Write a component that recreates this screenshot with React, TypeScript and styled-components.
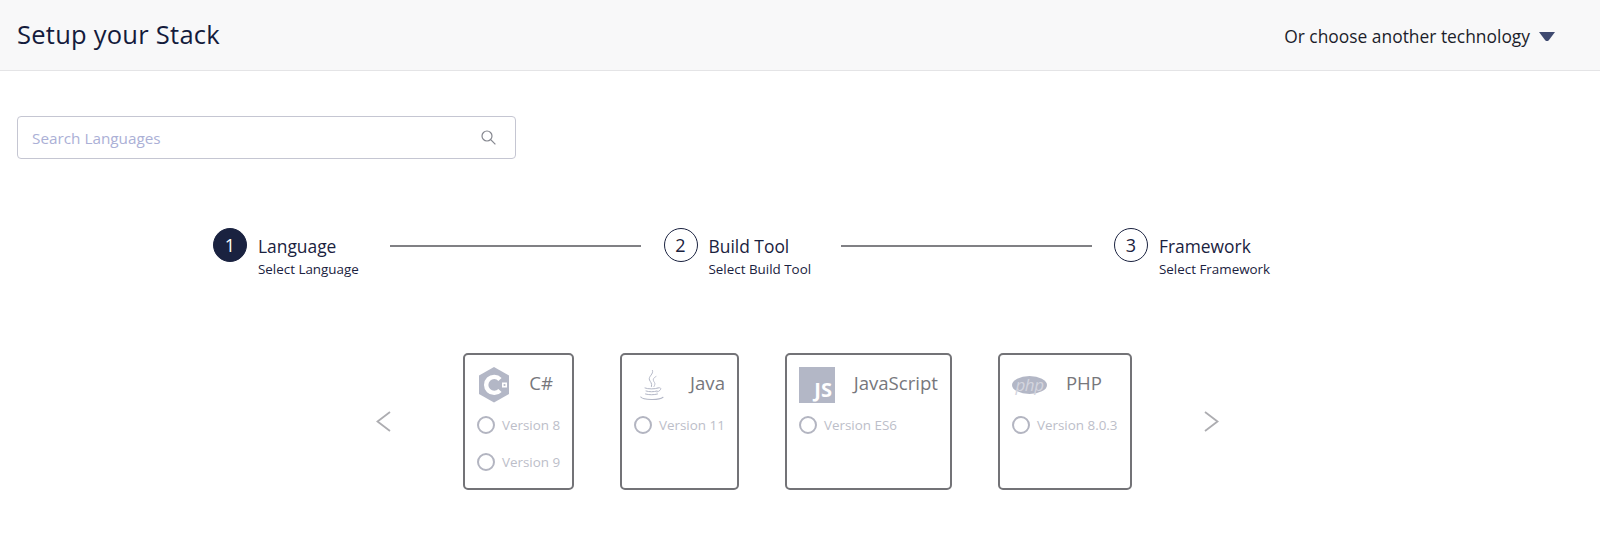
import React from 'react'
import styled, { createGlobalStyle } from 'styled-components'

const STEPS = [
    { title: 'Language', sub: 'Select Language' },
    { title: 'Build Tool', sub: 'Select Build Tool' },
    { title: 'Framework', sub: 'Select Framework' },
]

const CSharpIcon = () => (
    <svg width='34' height='36' viewBox='0 0 34 36'>
        <polygon points='17,0 32,8.5 32,27 17,35.5 2,27 2,8.5' fill='#b3b7c6' />
        <path d='M23 12.4 A8 8 0 1 0 23 23.4' fill='none' stroke='#fff' strokeWidth='4.4' />
        <rect x='25' y='15.5' width='5' height='5' fill='#fff' />
        <rect x='26.6' y='17.1' width='1.8' height='1.8' fill='#b3b7c6' />
    </svg>
)

const JavaIcon = () => (
    <svg width='24' height='31' viewBox='0 0 24 31' fill='none' stroke='#b3b7c6' strokeLinecap='round'>
        <path d='M12.5 .5 C14 4 8 6.5 9.5 10 C10.3 12 12.3 13 11.5 16.5' strokeWidth='1' />
        <path d='M16 6.5 C13 8 12.5 10 14.5 12.5 C15.3 13.7 14.8 15 14 16.5' strokeWidth='.9' />
        <path d='M5 18 C8 19.2 15 19.2 18 18 M6 21 C9 22 14 22 17 21 M5.5 24 C9 25 14 25 17.5 24' strokeWidth='1' />
        <path d='M18 18 C22 16.5 22 20.5 17 22' strokeWidth='.9' />
        <path d='M.8 27 C3 30 19 30.5 23 27.3' strokeWidth='1.1' />
    </svg>
)

export default function App() {
    return (
        <>
            <GlobalStyle />
            <Header>
                <PageTitle>Setup your Stack</PageTitle>
                <TechMenu>
                    Or choose another technology
                    <svg width='16' height='9' viewBox='0 0 16 9'>
                        <polygon points='0,0 16,0 10,8 9,9 7,9 6,8' fill='#3f4a70' />
                    </svg>
                </TechMenu>
            </Header>
            <Main>
                <SearchBox>
                    <SearchInput placeholder='Search Languages' />
                    <svg width='15' height='15' viewBox='0 0 15 15' fill='none' stroke='#85878f' strokeWidth='1.2'>
                        <circle cx='6' cy='6' r='5' />
                        <path d='M9.7 9.7 L14.4 14.4' />
                    </svg>
                </SearchBox>
                <Stepper>
                    {STEPS.map((step, i) => (
                        <React.Fragment key={step.title}>
                            <Step>
                                <StepNumber $active={i === 0}>{i + 1}</StepNumber>
                                <StepText>
                                    <StepTitle>{step.title}</StepTitle>
                                    <StepSub>{step.sub}</StepSub>
                                </StepText>
                            </Step>
                            {i < STEPS.length - 1 && <StepLine />}
                        </React.Fragment>
                    ))}
                </Stepper>
                <Carousel>
                    <Arrow viewBox='0 0 15 21'><polyline points='14,1 1.5,10.5 14,20' /></Arrow>
                    <Cards>
                        <Card $width={111}>
                            <CardHead $inset={7}>
                                <CSharpIcon />
                                <CardTitle>C#</CardTitle>
                            </CardHead>
                            <Version><Radio />Version 8</Version>
                            <Version><Radio />Version 9</Version>
                        </Card>
                        <Card $width={119}>
                            <CardHead $inset={0}>
                                <JavaSlot><JavaIcon /></JavaSlot>
                                <CardTitle>Java</CardTitle>
                            </CardHead>
                            <Version><Radio />Version 11</Version>
                        </Card>
                        <Card $width={167}>
                            <CardHead $inset={0}>
                                <JsLogo>JS</JsLogo>
                                <CardTitle>JavaScript</CardTitle>
                            </CardHead>
                            <Version><Radio />Version ES6</Version>
                        </Card>
                        <Card $width={134}>
                            <CardHead $inset={16}>
                                <PhpLogo>php</PhpLogo>
                                <CardTitle>PHP</CardTitle>
                            </CardHead>
                            <Version><Radio />Version 8.0.3</Version>
                        </Card>
                    </Cards>
                    <Arrow viewBox='0 0 15 21'><polyline points='1,1 13.5,10.5 1,20' /></Arrow>
                </Carousel>
            </Main>
        </>
    )
}

const GlobalStyle = createGlobalStyle`
    html, body {
        margin: 0;
        height: 538px;
        overflow: hidden;
        background: #fff;
        font-family: "Open Sans", "Noto Sans", sans-serif;
        color: #1a2240;
    }
    * {
        box-sizing: border-box;
    }
`

const Header = styled.header`
    display: flex;
    align-items: center;
    justify-content: space-between;
    height: 71px;
    padding: 0 45px 0 17px;
    background: #f8f8f9;
    border-bottom: 1px solid #e4e4e6;
`

const PageTitle = styled.h1`
    margin: 0 0 2px;
    font-size: 25.5px;
    font-weight: 400;
    letter-spacing: .25px;
    color: #141b3c;
`

const TechMenu = styled.div`
    display: flex;
    align-items: center;
    gap: 9px;
    margin-top: 2px;
    font-size: 17.4px;
    color: #1c1e2b;
`

const Main = styled.main`
    padding: 45px 0 0 17px;
`

const SearchBox = styled.div`
    display: flex;
    align-items: center;
    width: 499px;
    height: 43px;
    padding: 0 19px 0 14px;
    border: 1.5px solid #c5c6d2;
    border-radius: 4px;
`

const SearchInput = styled.input`
    flex: 1;
    border: 0;
    outline: 0;
    padding: 0;
    font: inherit;
    font-size: 15.3px;
    background: transparent;

    &::placeholder {
        color: #abb0d6;
        opacity: 1;
    }
`

const Stepper = styled.div`
    display: flex;
    margin: 69px 0 0 196px;
    height: 52px;
`

const Step = styled.div`
    display: flex;
    gap: 11px;
`

const StepNumber = styled.div<{ $active: boolean }>`
    display: flex;
    align-items: center;
    justify-content: center;
    width: 34px;
    height: 34px;
    border-radius: 50%;
    border: 1px solid #1a2240;
    font-size: 18px;
    background: ${p => (p.$active ? '#1a2240' : '#fff')};
    color: ${p => (p.$active ? '#fff' : '#1a2240')};
`

const StepText = styled.div`
    width: 132px;
    padding-top: 7px;
`

const StepTitle = styled.div`
    font-size: 17.4px;
    line-height: 22px;
`

const StepSub = styled.div`
    margin-top: 2px;
    font-size: 13.4px;
    line-height: 20px;
`

const StepLine = styled.div`
    width: 251px;
    height: 2px;
    margin: 17px 22.5px 0 0;
    background: #808084;
`

const Carousel = styled.div`
    display: flex;
    align-items: center;
    margin: 73px 0 0 359px;
`

const Arrow = styled.svg`
    width: 15px;
    height: 21px;
    fill: none;
    stroke: #adadb1;
    stroke-width: 1.8;
`

const Cards = styled.div`
    display: flex;
    gap: 46px;
    margin: 0 72px;
`

const Card = styled.div<{ $width: number }>`
    width: ${p => p.$width}px;
    height: 137px;
    padding: 12px;
    border: 2px solid #737377;
    border-radius: 5px;
`

const CardHead = styled.div<{ $inset: number }>`
    display: flex;
    align-items: center;
    justify-content: space-between;
    height: 36px;
    margin-bottom: 4px;
    padding-right: ${p => p.$inset}px;
`

const CardTitle = styled.div`
    margin-bottom: 5px;
    font-size: 18.6px;
    white-space: nowrap;
    color: #77777c;
`

const JavaSlot = styled.div`
    display: flex;
    margin-left: 6px;
`

const JsLogo = styled.div`
    display: flex;
    align-items: flex-end;
    justify-content: flex-end;
    width: 36px;
    height: 36px;
    padding: 0 3px 2px 0;
    background: #b3b7c6;
    color: #fff;
    font-size: 20px;
    line-height: 22px;
    font-weight: 700;
`

const PhpLogo = styled.div`
    display: flex;
    align-items: center;
    justify-content: center;
    width: 35px;
    height: 18px;
    border-radius: 50%;
    background: #b3b7c6;
    color: #d3d5de;
    font-size: 17px;
    letter-spacing: -.5px;
    line-height: 18px;
    font-style: italic;
`

const Version = styled.div`
    display: flex;
    align-items: center;
    gap: 7px;
    height: 36.5px;
    font-size: 13.4px;
    white-space: nowrap;
    color: #bcbec9;
`

const Radio = styled.span`
    flex: none;
    width: 18px;
    height: 18px;
    border-radius: 50%;
    border: 2px solid #b3b5c1;
`
